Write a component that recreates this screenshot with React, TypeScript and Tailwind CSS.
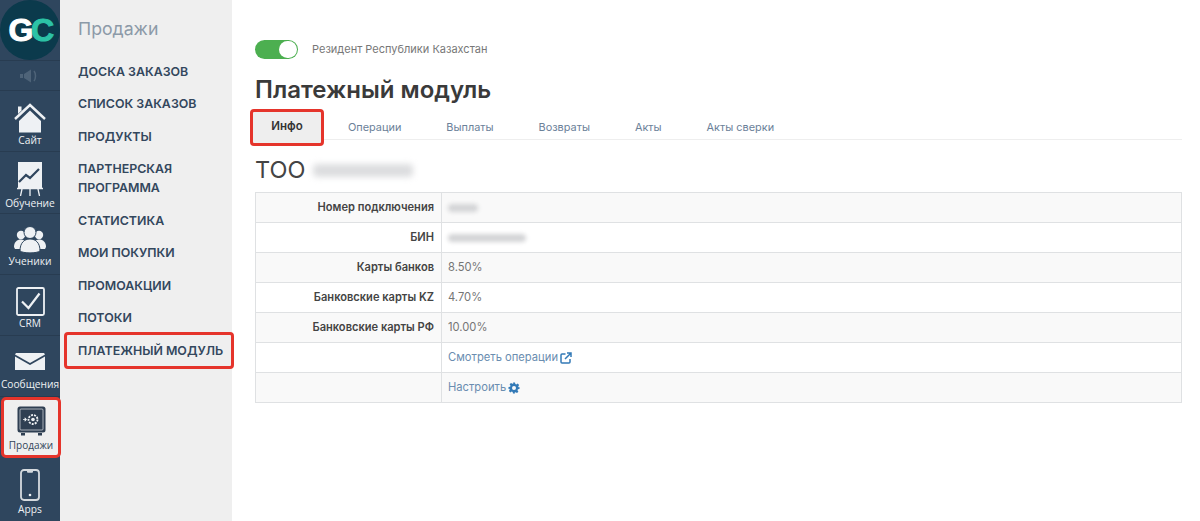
import React from "react";

const HomeIcon = () => (
  <svg width="32" height="30" viewBox="0 0 32 30">
    <path d="M4 3.500h3.500v4L4 11z" fill="#eef1f4" />
    <path d="M1 16 16 2l15 14" fill="none" stroke="#eef1f4" strokeWidth="2.400" />
    <path d="M5 18 16 7.500 27 18v11.500H5z" fill="#eef1f4" />
  </svg>
);
const BoardIcon = () => (
  <svg width="26" height="34" viewBox="0 0 26 34">
    <rect x="1" y="0" width="24" height="26" fill="#eef1f4" />
    <path d="M2 20 9 13l4 3 9-9" fill="none" stroke="#2f465e" strokeWidth="2.200" />
    <path d="M0 26.500h26M5 27l-1.500 7M13 27v7M21 27l1.500 7" stroke="#eef1f4" strokeWidth="1.300" fill="none" />
  </svg>
);
const UsersIcon = () => (
  <svg width="32" height="28" viewBox="0 0 32 28">
    <circle cx="7" cy="9" r="4.200" fill="#eef1f4" />
    <circle cx="25" cy="9" r="4.200" fill="#eef1f4" />
    <path d="M0 21c0-5 3-7.500 7-7.500s6 3 6 7.500v2H1z" fill="#eef1f4" />
    <path d="M32 21c0-5-3-7.500-7-7.500s-6 3-6 7.500v2h12z" fill="#eef1f4" />
    <circle cx="16" cy="6.500" r="6" fill="#eef1f4" stroke="#2f465e" strokeWidth="1" />
    <path d="M6 25c0-8 4-12 10-12s10 4 10 12c-3 2.500-17 2.500-20 0z" fill="#eef1f4" stroke="#2f465e" strokeWidth="1" />
  </svg>
);
const CrmIcon = () => (
  <svg width="29" height="29" viewBox="0 0 29 29">
    <rect x="1" y="1" width="27" height="27" rx="1.500" fill="none" stroke="#eef1f4" strokeWidth="1.800" />
    <path d="M6 14.500 12.500 21 23.500 6.500" fill="none" stroke="#eef1f4" strokeWidth="2.200" />
  </svg>
);
const MailIcon = () => (
  <svg width="30" height="17" viewBox="0 0 30 17">
    <path d="M0 1.500 1 0h28l1 1.500L15 10z" fill="#eef1f4" />
    <path d="M0 3.500 15 12 30 3.500V17H0z" fill="#eef1f4" />
  </svg>
);
const SafeIcon = () => (
  <svg width="29" height="30" viewBox="0 0 29 30">
    <rect x="0.500" y="0.500" width="28" height="26" rx="2.500" fill="#2f3f52" />
    <rect x="3" y="3" width="23" height="21" rx="1" fill="none" stroke="#c8cdd3" strokeWidth="0.800" />
    <circle cx="16" cy="13.500" r="4.500" fill="none" stroke="#eef1f4" strokeWidth="1.800" strokeDasharray="2 1.100" />
    <circle cx="16" cy="13.500" r="1.800" fill="#eef1f4" />
    <path d="M6 13.500h2M8 11.800l1.500 1.700-1.500 1.700z" stroke="#eef1f4" strokeWidth="0.800" fill="#eef1f4" />
    <path d="M4 27h4v2.500H4zM21 27h4v2.500h-4z" fill="#2f3f52" />
  </svg>
);
const PhoneIcon = () => (
  <svg width="20" height="32" viewBox="0 0 20 32">
    <rect x="1" y="1" width="18" height="30" rx="3" fill="none" stroke="#d5dade" strokeWidth="1.800" />
    <path d="M7 1.500h6v1.200a1 1 0 0 1-1 1H8a1 1 0 0 1-1-1z" fill="#d5dade" />
    <circle cx="10" cy="26" r="1.300" fill="#eef1f4" />
  </svg>
);
const Speaker = () => (
  <svg width="20" height="14" viewBox="0 0 20 14">
    <path d="M0 5h3v4H0zM4 5l7-4.500v13L4 9z" fill="#4e6378" />
    <path d="M14 2c2 2.500 2 7.500 0 10" fill="none" stroke="#4e6378" strokeWidth="1.500" />
  </svg>
);

const rail = [
  { label: "Сайт", icon: <HomeIcon />, cls: "pb-[4px]" },
  { label: "Обучение", icon: <BoardIcon />, cls: "pb-[3px]" },
  { label: "Ученики", icon: <UsersIcon />, cls: "pb-[6px]" },
  { label: "CRM", icon: <CrmIcon />, cls: "pb-[5px]" },
  { label: "Сообщения", icon: <MailIcon />, cls: "pb-[5px] gap-[7px]" },
];

const menu = ["ДОСКА ЗАКАЗОВ", "СПИСОК ЗАКАЗОВ", "ПРОДУКТЫ", "ПАРТНЕРСКАЯ ПРОГРАММА", "СТАТИСТИКА", "МОИ ПОКУПКИ", "ПРОМОАКЦИИ", "ПОТОКИ"];
const tabs = ["Операции", "Выплаты", "Возвраты", "Акты", "Акты сверки"];

const Blur = ({ w }: { w: string }) => <span className={`block h-[8px] rounded-sm bg-[#d3d4d6] blur-[2px] ${w}`} />;

const Row = ({ label, children, alt }: { label?: string; children: React.ReactNode; alt?: boolean }) => (
  <div className={`flex h-[30px] border-b border-[#dfe1e3] last:h-[29px] last:border-b-0 ${alt ? "bg-[#f9f9f9]" : "bg-white"}`}>
    <div className="flex w-[186px] shrink-0 items-center justify-end border-r border-[#dfe1e3] pr-[7px] text-[11.100px] font-semibold text-[#444]">{label}</div>
    <div className="flex flex-1 items-center gap-[2px] pl-[6px] text-[11.200px] text-[#757575]">{children}</div>
  </div>
);

export default function App() {
  return (
    <div className="flex h-[521px] w-[1200px] overflow-hidden bg-white" style={{ fontFamily: "Inter, 'Noto Sans', sans-serif" }}>
      <aside className="relative z-10 flex w-[60px] shrink-0 flex-col bg-[#2f465e] text-center" style={{ fontFamily: "'Open Sans', sans-serif" }}>
        <div className="flex h-[60px] items-center justify-center rounded-full bg-[#0b3a4c]">
          <span className="text-[32px] font-black leading-none tracking-[-2.500px] text-white" style={{ fontFamily: "'Liberation Sans', sans-serif", WebkitTextStroke: "1px currentColor" }}>
            G<span className="text-[#2cc2a6]">C</span>
          </span>
        </div>
        <div className="flex h-[31px] items-center justify-center border-y border-[#283c51]"><Speaker /></div>
        {rail.map((r) => (
          <div key={r.label} className={`flex h-[61.300px] flex-col items-center justify-end border-b border-[#283c51] text-[10.200px] font-medium leading-[14px] text-[#eef1f4] ${r.cls}`}>
            {r.icon}
            <span className="whitespace-nowrap">{r.label}</span>
          </div>
        ))}
        <div className="ml-[1px] flex h-[61px] w-[60px] flex-col items-center justify-center gap-[3px] rounded-[5px] border-[3px] border-[#e5342b] bg-[#efefef] pt-[3px] text-[10px] font-normal leading-[13px] text-[#33465a]">
          <SafeIcon />
          <span>Продажи</span>
        </div>
        <div className="flex flex-1 flex-col items-center justify-end gap-[1px] pb-[5px] text-[10.200px] font-medium leading-[14px] text-[#eef1f4]">
          <PhoneIcon />
          <span>Apps</span>
        </div>
      </aside>

      <nav className="flex w-[172px] shrink-0 flex-col bg-[#efefef] pl-[4px]">
        <div className="pl-[14px] pt-[15px] text-[17.700px] font-normal leading-[27px] text-[#8c9aa8]">Продажи</div>
        <ul className="mt-[13px] flex flex-col text-[12.400px] font-semibold leading-[19px] text-[#33475d]">
          {menu.map((m) => (
            <li key={m} className="py-[6.750px] pl-[14px] pr-[20px]">{m}</li>
          ))}
          <li className="-mt-[2px] h-[37px] w-[170px] whitespace-nowrap rounded-[4px] border-[3px] border-[#e5342b] pl-[11px] pt-[6px]">ПЛАТЕЖНЫЙ МОДУЛЬ</li>
        </ul>
      </nav>

      <main className="flex-1 pl-[23px] pr-[18px] pt-[40px]">
        <div className="flex items-center gap-[14px]">
          <div className="flex h-[19px] w-[43px] items-center justify-end rounded-full bg-[#4caf50] pr-[1px]">
            <span className="h-[17px] w-[18px] rounded-full bg-white" />
          </div>
          <span className="text-[11px] text-[#777]">Резидент Республики Казахстан</span>
        </div>
        <h1 className="mt-[15px] text-[24px] font-semibold leading-[32px] text-[#3a3a3a]">Платежный модуль</h1>
        <div className="mt-[9px] flex h-[25px] items-center border-b border-[#eeeeee] text-[10.900px] text-[#6b8199]">
          <div className="-ml-[5px] flex h-[37px] w-[74px] shrink-0 items-center justify-center rounded-[4px] border-[3px] border-[#e5342b] bg-[#eeeeee] text-[11.500px] font-semibold text-[#333]">Инфо</div>
          <div className="ml-[24px] flex gap-[45px]">
            {tabs.map((t) => <span key={t}>{t}</span>)}
          </div>
        </div>
        <div className="mt-[12px] flex h-[36px] items-center gap-[8px]">
          <span className="text-[23.500px] font-normal text-[#444]">ТОО</span>
          <span className="h-[13px] w-[100px] rounded-sm bg-[#dcdddf] blur-[3px]" />
        </div>
        <div className="mt-[4px] border border-[#dfe1e3]">
          <Row label="Номер подключения" alt><Blur w="w-[30px]" /></Row>
          <Row label="БИН"><Blur w="w-[78px]" /></Row>
          <Row label="Карты банков" alt>8.50%</Row>
          <Row label="Банковские карты KZ">4.70%</Row>
          <Row label="Банковские карты РФ" alt>10.00%</Row>
          <Row>
            <span className="text-[#6a8db0]">Смотреть операции</span>
            <svg width="12" height="12" viewBox="0 0 24 24" fill="none" stroke="#337ab7" strokeWidth="3"><path d="M20 14v6a2 2 0 0 1-2 2H4a2 2 0 0 1-2-2V6a2 2 0 0 1 2-2h7" /><path d="M14 2h8v8M22 2 10 14" /></svg>
          </Row>
          <Row alt>
            <span className="text-[#6a8db0]">Настроить</span>
            <svg width="12" height="12" viewBox="0 0 24 24"><path fillRule="evenodd" fill="#337ab7" d="M10 1h4l.7 3.200 1.900.8 2.800-1.800 2.800 2.800-1.800 2.800.8 1.900L23 10v4l-3.200.7-.8 1.900 1.800 2.800-2.800 2.800-2.800-1.800-1.900.8L14 23h-4l-.7-3.200-1.900-.8-2.800 1.800-2.800-2.800 1.800-2.800-.8-1.900L1 14v-4l3.200-.7.8-1.900L3.200 4.600 6 1.800l2.800 1.800 1.900-.8zM12 8a4 4 0 1 0 0 8 4 4 0 0 0 0-8z" /></svg>
          </Row>
        </div>
      </main>
    </div>
  );
}
